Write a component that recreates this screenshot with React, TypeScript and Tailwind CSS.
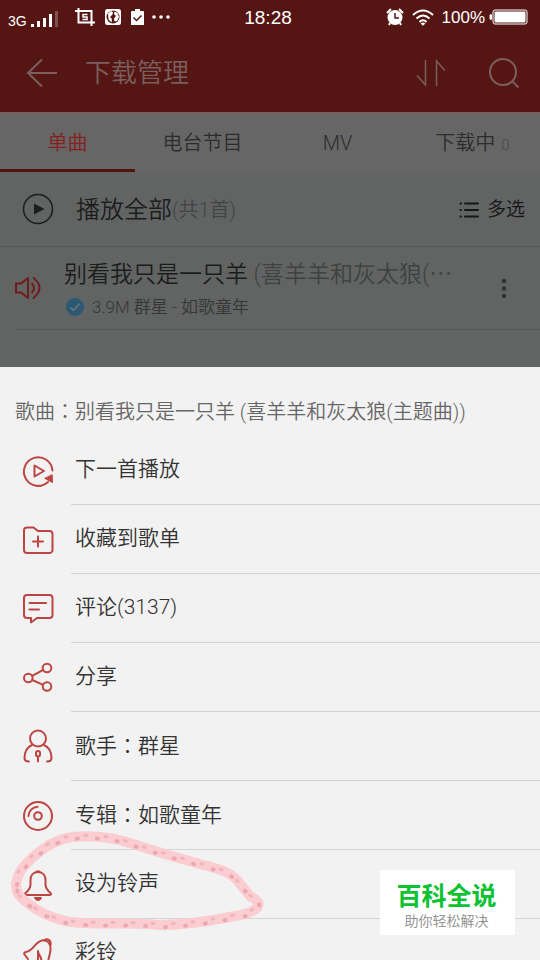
import type { ReactNode } from "react";

const TABS = [
  { id: "songs", label: "单曲" },
  { id: "radio", label: "电台节目" },
  { id: "mv", label: "MV" },
  { id: "loading", label: "下载中", count: 0 },
];

const Icon = ({ children }: { children: ReactNode }) => (
  <svg
    viewBox="0 0 36 36"
    className="size-9 shrink-0 text-[#bd4541]"
    fill="none"
    stroke="currentColor"
    strokeWidth="2"
    strokeLinecap="round"
    strokeLinejoin="round"
    aria-hidden="true"
  >
    {children}
  </svg>
);

// full-width colon that sits in the middle of its cell
const Colon = () => <span className="font-['Noto_Sans_CJK_TC',sans-serif]">：</span>;

const NextIcon = () => (
  <Icon>
    <path d="M32.500 17.500A14.300 14.300 0 1 0 28 29" />
    <path d="M14.500 12.500v11l9.500-5.500z" />
    <path d="M32.200 22l.3 7.500-7.500-4z" fill="currentColor" strokeWidth="1" />
  </Icon>
);

const FolderIcon = () => (
  <Icon>
    <path d="M4 28V8.500a3 3 0 0 1 3-3h6.500l4.500 3.500h11.500a3 3 0 0 1 3 3V28a3 3 0 0 1-3 3H7a3 3 0 0 1-3-3z" />
    <path d="M18 14.500v10M13 19.500h10" />
  </Icon>
);

const CommentIcon = () => (
  <Icon>
    <path d="M7 4h22.500a3 3 0 0 1 3 3v17a3 3 0 0 1-3 3H17l-6 4.500V27H7a3 3 0 0 1-3-3V7a3 3 0 0 1 3-3z" />
    <path d="M9.500 12h16.500M9.500 18.500h9.500" />
  </Icon>
);

const ShareIcon = () => (
  <Icon>
    <circle cx="8.300" cy="18" r="4.300" />
    <circle cx="27" cy="8" r="4.300" />
    <circle cx="27" cy="26.500" r="4.300" />
    <path d="M12.200 15.800l11-5.900M12.200 20l11 4.800" />
  </Icon>
);

const SingerIcon = () => (
  <Icon>
    <circle cx="18" cy="9.500" r="8" />
    <path d="M12 16C6.500 18.500 4.500 23.500 4.500 29q0 3.500 4.500 3.500M24 16c5.500 2.500 7.500 7.500 7.500 13q0 3.500-4.500 3.500" />
    <rect x="16" y="22" width="4" height="5.500" rx="2" />
    <path d="M18 27.500v5" />
  </Icon>
);

const AlbumIcon = () => (
  <Icon>
    <circle cx="18" cy="18" r="14" />
    <circle cx="18" cy="18" r="3.800" />
    <path d="M8.500 18a9.500 9.500 0 0 1 9-9.300" />
  </Icon>
);

const BellIcon = () => (
  <Icon>
    <path d="M18 5c-5 0-7.500 3.500-7.500 8v4.500c0 4-2 6-5 8.500-1 1-.5 2 1 2h23c1.500 0 2-1 1-2-3-2.500-5-4.500-5-8.500V13c0-4.500-2.500-8-7.500-8z" />
    <path d="M16.500 4.500h3" />
    <path d="M14.500 30.500h7q-.5 3-3.500 3t-3.500-3z" fill="currentColor" strokeWidth="1" />
  </Icon>
);

const RingbackIcon = () => (
  <Icon>
    <path d="M8 23L4.500 18.500Q3.500 16.500 6 16C14 14.500 14.500 6 22 4.500C28 3.500 31 8 30.500 14C30 20 27 24 28 32" />
    <path d="M24.500 4.500C27 2 31.500 4 30.500 9" />
    <path d="M18 32V15c0 4 3.500 5 3.500 10" />
  </Icon>
);

// marker loop drawn by hand around one row
const LOOP =
  "M16 63C18 52 24 45 32 38C44 27 56 19 72 17C92 15 112 17 130 23C150 30 175 37 200 44C214 48 229 51 236 59L250 76Q262 82 257 88Q250 94 235 96C210 101 185 105 160 105C130 102 100 105 70 102C52 99 37 91 25 81Q15 74 16 63z";

const Marker = () => (
  <svg
    viewBox="0 0 280 120"
    width="280"
    height="120"
    className="pointer-events-none absolute -top-[30px] left-0 z-10"
    fill="none"
    strokeLinecap="round"
    strokeLinejoin="round"
    aria-hidden="true"
  >
    <path d={LOOP} stroke="#fbcdd1" strokeWidth="10" />
    <path d={LOOP} stroke="#eaa9b0" strokeWidth="4" strokeDasharray="1 19" transform="translate(1 2)" />
    <path d={LOOP} stroke="#f0b5bb" strokeWidth="3" strokeDasharray="2 18" strokeDashoffset="10" transform="translate(-1 -1)" />
  </svg>
);

const MENU: { id: string; icon: ReactNode; label: ReactNode; marked?: boolean }[] = [
  { id: "next", icon: <NextIcon />, label: "下一首播放" },
  { id: "collect", icon: <FolderIcon />, label: "收藏到歌单" },
  { id: "comment", icon: <CommentIcon />, label: "评论(3137)" },
  { id: "share", icon: <ShareIcon />, label: "分享" },
  { id: "singer", icon: <SingerIcon />, label: <>歌手<Colon />群星</> },
  { id: "album", icon: <AlbumIcon />, label: <>专辑<Colon />如歌童年</> },
  { id: "ringtone", icon: <BellIcon />, label: "设为铃声", marked: true },
  { id: "ringback", icon: <RingbackIcon />, label: "彩铃" },
];

const StatusBar = () => (
  <div className="grid h-[34px] grid-cols-[1fr_auto_1fr] items-center pl-2 pr-3 font-['Liberation_Sans',sans-serif] text-white">
    <div className="flex items-center">
      <span className="pt-2 text-[14px] leading-5">3G</span>
      <svg viewBox="0 0 28 18" className="ml-1 mt-1 h-[18px] w-7" fill="currentColor" aria-hidden="true">
        <path d="M0 14h3v3H0zM6 11h3v6H6zM12 8h3v9h-3zM18 4h3v13h-3z" />
        <path d="M24 1h3v16h-3z" opacity=".25" />
      </svg>
      <svg viewBox="0 0 20 18" className="ml-4 h-[18px] w-5" fill="none" stroke="currentColor" strokeWidth="2" aria-hidden="true">
        <path d="M0 3h16.500v15M3.500 0v14.500H20" />
        <path d="M12.500 6.500H8v2.500h4v2.500H7.500" strokeWidth="1.500" />
      </svg>
      <svg viewBox="0 0 16 16" className="ml-2.5 size-4" aria-hidden="true">
        <rect width="16" height="16" rx="2.500" fill="#fff" />
        <circle cx="8" cy="8" r="6.500" fill="#551613" />
        <path d="M3 4.500l3-2.500 2 1-.5 2.500L5 8l2 2-.5 3.500-3-3zM9.500 2.500l3 1.500 1.500 4-2 4-2.500.5-.5-3 2-2.500-2-2z" fill="#fff" />
      </svg>
      <svg viewBox="0 0 13 17" className="ml-2.5 h-[17px] w-[13px]" aria-hidden="true">
        <path d="M1 2h3V0h5v2h3a1 1 0 0 1 1 1v13H0V3a1 1 0 0 1 1-1z" fill="#fff" />
        <path d="M2.500 8.500l3 3 5-5" fill="none" stroke="#551613" strokeWidth="1.500" />
      </svg>
      <svg viewBox="0 0 18 4" className="ml-2 h-1 w-[18px]" fill="currentColor" aria-hidden="true">
        <circle cx="2" cy="2" r="1.800" />
        <circle cx="9" cy="2" r="1.800" />
        <circle cx="16" cy="2" r="1.800" />
      </svg>
    </div>
    <time className="pt-0.5 text-[19px] leading-6">18:28</time>
    <div className="flex items-center justify-end">
      <svg viewBox="0 0 18 18" className="size-[18px]" aria-hidden="true">
        <circle cx="9" cy="9.500" r="7.500" fill="#fff" />
        <path d="M1 5l4-4M17 5l-4-4M4 15l-1 2M14 15l1 2" stroke="#fff" strokeWidth="2" />
        <path d="M9 5v5h4" fill="none" stroke="#551613" strokeWidth="1.500" />
      </svg>
      <svg viewBox="0 0 22 17" className="ml-2 h-[17px] w-[22px]" fill="none" stroke="#fff" strokeWidth="2" aria-hidden="true">
        <path d="M1 6q10-9 20 0M4.500 9.500q6.500-6 13 0M7.500 13q3.500-3.500 7 0" />
        <path d="M9 14.500q2-1.500 4 0l-2 2z" fill="#fff" strokeWidth="0.500" />
      </svg>
      <span className="ml-2 pt-0.5 text-[17px] leading-6">100%</span>
      <svg viewBox="0 0 39 16" className="ml-1 h-4 w-[39px]" aria-hidden="true">
        <path d="M1 6q1.500-1 1.500 0v4q0 1-1.500 0z" fill="#fff" stroke="#fff" />
        <rect x="4" y="1" width="34" height="14" rx="2" fill="none" stroke="#fff" />
        <rect x="5.500" y="2.500" width="31" height="11" rx="1" fill="#fff" />
      </svg>
    </div>
  </div>
);

const Header = () => (
  <header className="bg-[#551613]">
    <StatusBar />
    <div className="flex h-[78px] items-center pl-[26px] pr-5 text-[#795f5d]">
      <button aria-label="返回">
        <svg viewBox="0 0 32 30" className="h-[30px] w-8" fill="none" stroke="currentColor" strokeWidth="2" aria-hidden="true">
          <path d="M31 15H2M16 1.500L2 15l14 13.500" />
        </svg>
      </button>
      <h1 className="ml-[27px] flex-1 text-[26px] leading-8">下载管理</h1>
      <button aria-label="排序">
        <svg viewBox="0 0 30 30" className="h-[30px] w-[30px]" fill="none" stroke="currentColor" strokeWidth="1.500" aria-hidden="true">
          <path d="M9.500 2v25L1 17.500M20.500 28V3l8.500 9.500" />
        </svg>
      </button>
      <button aria-label="搜索" className="ml-[42px]">
        <svg viewBox="0 0 32 32" className="size-8" fill="none" stroke="currentColor" strokeWidth="2" aria-hidden="true">
          <circle cx="15" cy="15" r="13" />
          <path d="M24 24l6.500 6.500" />
        </svg>
      </button>
    </div>
  </header>
);

const SongList = () => (
  <main className="bg-[#616463] pb-[37px]">
    <div className="flex h-[75px] items-center border-b border-[#545756] pl-[22px] pr-[15px]">
      <button className="flex flex-1 items-center text-[#1c1d1d]">
        <svg viewBox="0 0 32 32" className="size-8" fill="none" stroke="currentColor" strokeWidth="1.500" aria-hidden="true">
          <circle cx="16" cy="16" r="14.500" />
          <path d="M12 10.500v11l10.500-5.500z" fill="currentColor" stroke="none" />
        </svg>
        <span className="ml-[22px] pt-0.5 text-[24px] leading-8">播放全部</span>
        <span className="pt-0.5 text-[20px] leading-8 text-[#414443]">(共1首)</span>
      </button>
      <button className="flex items-center gap-2 pt-0.5 text-[19px] leading-6 text-[#151616]">
        <svg viewBox="0 0 20 18" className="h-[18px] w-5" fill="none" stroke="currentColor" strokeWidth="2" strokeLinecap="round" aria-hidden="true">
          <path d="M6 2.500h13M6 9h13M6 15.500h13M1.500 2.500h.5M1.500 9h.5M1.500 15.500h.5" />
        </svg>
        多选
      </button>
    </div>
    <div className="ml-[15px] flex h-[83px] items-center border-b border-[#545756] pr-8">
      <svg viewBox="0 0 26 24" className="h-6 w-[26px] shrink-0 text-[#701b1d]" fill="none" stroke="currentColor" strokeWidth="2" strokeLinejoin="round" aria-hidden="true">
        <path d="M1 7.500v9h5l7 5.500v-20l-7 5.500z" />
        <path d="M16.500 7q5 5 0 10M18 1.500q13 10 0 21" />
      </svg>
      <div className="ml-[23px] min-w-0 flex-1 pt-0.5">
        <p className="truncate text-[23px] leading-8 text-[#1b1c1c]">
          别看我只是一只羊{" "}
          <span className="text-[#3f4241]">
            (喜羊羊和灰太狼(<span className="font-['Noto_Sans_CJK_SC',sans-serif]">…</span>
          </span>
        </p>
        <p className="flex items-center text-[17px] leading-8 text-[#343736]">
          <svg viewBox="0 0 18 18" className="ml-0.5 mr-2 size-[18px]" aria-hidden="true">
            <circle cx="9" cy="9" r="9" fill="#2a5a73" />
            <path d="M4.500 9.500l3 3 6-7" fill="none" stroke="#727675" strokeWidth="1.500" />
          </svg>
          3.9M 群星 - 如歌童年
        </p>
      </div>
      <button aria-label="更多">
        <svg viewBox="0 0 8 22" className="h-[22px] w-2" fill="#303232" aria-hidden="true">
          <circle cx="4" cy="4" r="2.200" />
          <circle cx="4" cy="11.500" r="2.200" />
          <circle cx="4" cy="19" r="2.200" />
        </svg>
      </button>
    </div>
  </main>
);

const ActionSheet = () => (
  <section className="min-h-0 flex-1 overflow-hidden bg-[#f2f2f2]">
    <h2 className="h-[69px] px-[15px] pt-7 text-[20px] leading-8 text-[#666]">
      歌曲<Colon />别看我只是一只羊 (喜羊羊和灰太狼(主题曲))
    </h2>
    <ul>
      {MENU.map((item) => (
        <li key={item.id} className="relative">
          <button className="flex h-[69px] w-full items-center pl-5 text-left text-[21px] leading-8 text-[#333]">
            {item.icon}
            <span className="ml-[15px] flex h-full flex-1 items-center border-b border-[#d3d5d5] pb-0.5 pl-1">
              <span>{item.label}</span>
            </span>
          </button>
          {item.marked ? <Marker /> : null}
        </li>
      ))}
    </ul>
  </section>
);

export default function App() {
  return (
    <div className="relative flex h-screen flex-col overflow-hidden font-['Roboto','Noto_Sans_CJK_SC',sans-serif] font-[350]">
      <Header />
      <nav className="grid h-[60px] grid-cols-4 border-t-2 border-[#73605f] bg-[#666]">
        {TABS.map((tab, i) => (
          <button
            key={tab.id}
            className={`flex items-center justify-center border-b-3 pt-0.5 text-[20px] leading-8 ${
              i === 0 ? "border-[#54130f] text-[#87201c]" : "border-transparent text-[#2c2c2c]"
            }`}
          >
            {tab.label}
            {tab.count !== undefined ? (
              <span className="ml-1.5 pt-1 text-[15px] text-[#484848]">{tab.count}</span>
            ) : null}
          </button>
        ))}
      </nav>
      <SongList />
      <ActionSheet />
      <aside className="absolute bottom-[25px] right-[25px] z-20 flex h-[65px] w-[135px] flex-col items-center justify-center bg-white pr-0.5 pt-1">
        <strong className="text-[25px] font-bold leading-8 text-[#0bc232]">百科全说</strong>
        <span className="text-[14px] leading-4 text-[#8c8c8c]">助你轻松解决</span>
      </aside>
    </div>
  );
}
